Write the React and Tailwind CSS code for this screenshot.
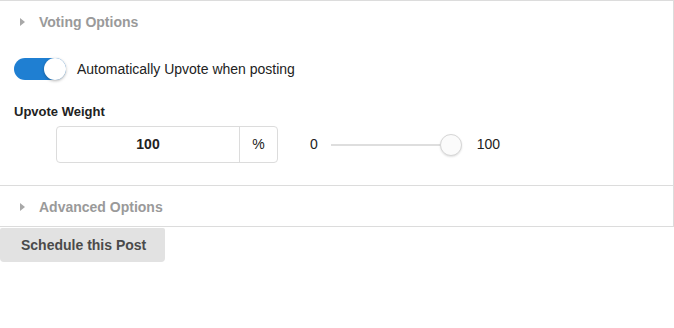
import React from 'react';

const Caret = () => (
  <span className="inline-block w-0 h-0 border-y-[4px] border-y-transparent border-l-[5px] border-l-[#a8a8a8] mr-[14px] ml-[20px]" />
);

export default function App() {
  return (
    <div className="w-[674px] h-[328px] bg-white font-['Liberation_Sans',Arial,sans-serif] text-[14px] text-[#222]">
      <div className="border-t border-r border-b border-[#dcdcdc]">
        <div className="h-[42px] flex items-center font-bold text-[#9a9a9a]">
          <Caret />
          <span>Voting Options</span>
        </div>
        <div className="h-[52px] flex items-center pl-[14px]">
          <div className="relative w-[52px] h-[22px] rounded-full bg-[#1f7fd2]">
            <div className="absolute right-0 top-0 w-[22px] h-[22px] rounded-full bg-white shadow-[0_1px_3px_rgba(0,0,0,0.3)]" />
          </div>
          <span className="ml-[11px] text-[#222]">Automatically Upvote when posting</span>
        </div>
        <div className="pl-[14px] pt-[10px] text-[13px] font-bold text-[#222] leading-[14px]">Upvote Weight</div>
        <div className="flex items-center pl-[56px] mt-[7px]">
          <div className="flex h-[37px] border border-[#dcdcdc] rounded-[4px]">
            <div className="w-[182px] flex items-center justify-center font-bold">100</div>
            <div className="w-[38px] flex items-center justify-center border-l border-[#dcdcdc]">%</div>
          </div>
          <span className="ml-[32px]">0</span>
          <div className="relative ml-[13px] w-[131px] h-[22px] flex items-center">
            <div className="w-[110px] h-[2px] bg-[#dedede]" />
            <div className="absolute left-[109px] top-0 w-[22px] h-[22px] rounded-full bg-[#fbfbfb] border border-[#d6d6d6] shadow-[0_1px_2px_rgba(0,0,0,0.12)]" />
          </div>
          <span className="ml-[15px]">100</span>
        </div>
        <div className="h-[23px] border-b border-[#dcdcdc]" />
        <div className="h-[40px] pt-[2px] flex items-center font-bold text-[#9a9a9a]">
          <Caret />
          <span>Advanced Options</span>
        </div>
      </div>
      <button className="mt-[1px] w-[165px] h-[34px] bg-[#e2e2e2] rounded-b-[4px] rounded-t-[2px] text-left pl-[21px] font-bold text-[#4a4a4a]">
        Schedule this Post
      </button>
    </div>
  );
}
